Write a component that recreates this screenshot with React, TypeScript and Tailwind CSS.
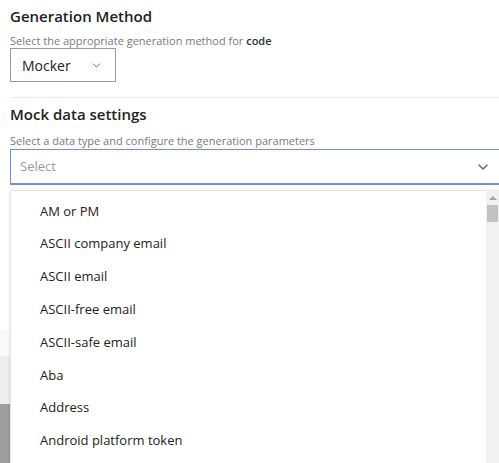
import { ChevronDown } from "lucide-react";

const dataTypes = [
  "AM or PM",
  "ASCII company email",
  "ASCII email",
  "ASCII-free email",
  "ASCII-safe email",
  "Aba",
  "Address",
  "Android platform token",
];

function Scrollbar() {
  return (
    <div className="flex w-[13px] shrink-0 flex-col items-center bg-[#f1f1f1]">
      <div className="mt-[5px] h-0 w-0 border-x-[4px] border-b-[4px] border-x-transparent border-b-[#a3a3a3]" />
      <div className="mt-[5px] h-[17px] w-[11px] bg-[#c1c1c1]" />
      <div className="flex-1" />
      <div className="mb-[5px] h-0 w-0 border-x-[4px] border-t-[4px] border-x-transparent border-t-[#505050]" />
    </div>
  );
}

export default function App() {
  return (
    <div
      className="h-[463px] w-[499px] overflow-hidden bg-white text-[#222]"
      style={{ fontFamily: '"Open Sans", "Liberation Sans", sans-serif' }}
    >
      <div className="pl-[10px]">
        <h2 className="pt-[5px] text-[15px] font-semibold leading-[22px]">Generation Method</h2>
        <p className="mt-[7px] text-[11px] leading-[14px] text-[#7a7a7a]">
          Select the appropriate generation method for <span className="font-semibold text-[#333]">code</span>
        </p>
        <button className="flex h-[34px] w-[106px] items-center justify-between border border-[#9a9a9a] pl-[11px] pr-[12px] text-[14px] text-[#222]">
          Mocker
          <ChevronDown className="h-[13px] w-[13px] text-[#555]" strokeWidth={1.5} />
        </button>
        <div className="mt-[15px] h-px bg-[#ececec]" />

        <h2 className="mt-[5px] text-[15px] font-semibold leading-[22px]">Mock data settings</h2>
        <p className="mt-[9px] text-[11px] leading-[14px] text-[#7a7a7a]">
          Select a data type and configure the generation parameters
        </p>

        <div className="relative mt-[1px]">
          <div className="flex h-[36px] items-center justify-between border border-b-2 border-r-0 border-[#6d8ee6] pl-[9px] pr-[8px] text-[13px] text-[#9a9a9a]">
            Select
            <ChevronDown className="h-[16px] w-[16px] text-[#666]" strokeWidth={2.2} />
          </div>

          {/* content below the popup, only its left edge shows */}
          <div className="ml-[-10px] mt-[145px] h-[26px] w-[30px] bg-[#fafafa]" />
          <div className="ml-[-10px] h-[48px] w-[30px] bg-[#ededed]" />
          <div className="ml-[-10px] h-[80px] w-[30px] bg-[#9d9d9d]" />

          <div className="absolute left-0 right-0 top-[41px] flex h-[290px] border-l border-t border-[#e6e6e6] bg-white shadow-[-1px_0_2px_rgba(0,0,0,0.08)]">
            <ul className="flex-1 pt-[4px]">
              {dataTypes.map((t) => (
                <li key={t} className="flex h-[32.8px] items-center pl-[29px] text-[13px] text-[#222]">
                  {t}
                </li>
              ))}
            </ul>
            <Scrollbar />
          </div>
        </div>
      </div>
    </div>
  );
}
